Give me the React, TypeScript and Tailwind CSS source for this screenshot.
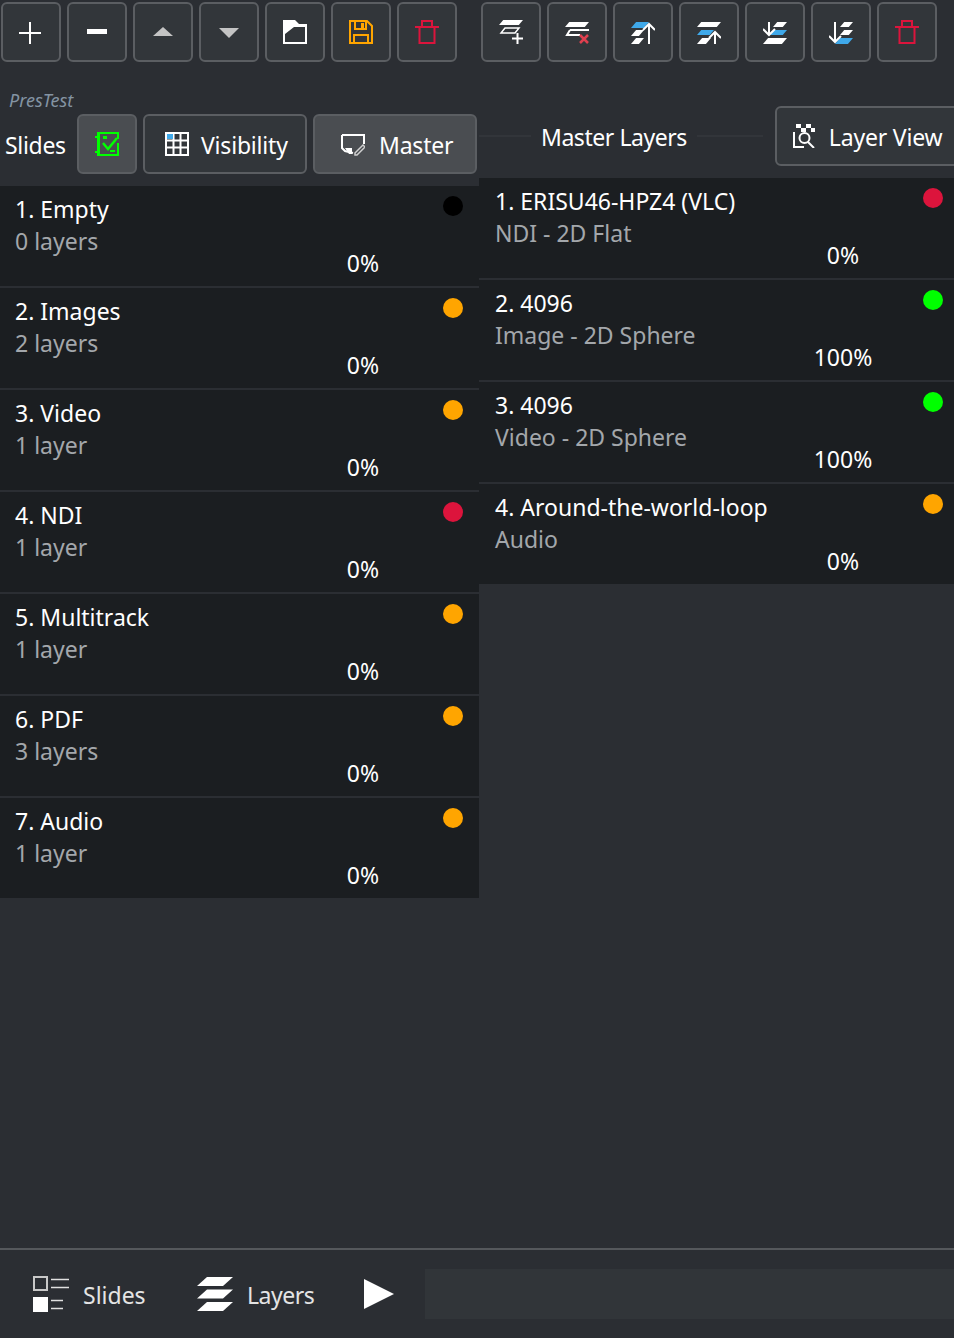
import type { ReactNode } from "react";

const BLUE = "#3fa9ea";

type RowData = {
  title: string;
  sub: string;
  pct: string;
  dot: string;
};

const slides: RowData[] = [
  { title: "1. Empty", sub: "0 layers", pct: "0%", dot: "bg-[#000000]" },
  { title: "2. Images", sub: "2 layers", pct: "0%", dot: "bg-[#ffa500]" },
  { title: "3. Video", sub: "1 layer", pct: "0%", dot: "bg-[#ffa500]" },
  { title: "4. NDI", sub: "1 layer", pct: "0%", dot: "bg-[#dc143c]" },
  { title: "5. Multitrack", sub: "1 layer", pct: "0%", dot: "bg-[#ffa500]" },
  { title: "6. PDF", sub: "3 layers", pct: "0%", dot: "bg-[#ffa500]" },
  { title: "7. Audio", sub: "1 layer", pct: "0%", dot: "bg-[#ffa500]" },
];

const layers: RowData[] = [
  { title: "1. ERISU46-HPZ4 (VLC)", sub: "NDI - 2D Flat", pct: "0%", dot: "bg-[#dc143c]" },
  { title: "2. 4096", sub: "Image - 2D Sphere", pct: "100%", dot: "bg-[#00ff00]" },
  { title: "3. 4096", sub: "Video - 2D Sphere", pct: "100%", dot: "bg-[#00ff00]" },
  { title: "4. Around-the-world-loop", sub: "Audio", pct: "0%", dot: "bg-[#ffa500]" },
];

function Icon({ children, w = 24, h = 24 }: { children: ReactNode; w?: number; h?: number }) {
  return (
    <svg width={w} height={h} viewBox={`0 0 ${w} ${h}`} fill="none" className="shrink-0">
      {children}
    </svg>
  );
}

function Trash() {
  return (
    <Icon>
      <path d="M0 7h24" stroke="#dc143c" strokeWidth="2" />
      <path d="M4.500 7v16h15V7" stroke="#dc143c" strokeWidth="2" />
      <path d="M7 6V1h10v5" stroke="#dc143c" strokeWidth="2" />
    </Icon>
  );
}

function Para({ x, y, w, h, fill }: { x: number; y: number; w: number; h: number; fill: string }) {
  const s = h * 0.85;
  return <polygon points={`${x + s},${y} ${x + w},${y} ${x + w - s},${y + h} ${x},${y + h}`} fill={fill} />;
}

function Arrow({ x, y1, y2, up }: { x: number; y1: number; y2: number; up: boolean }) {
  const tip = up ? y1 : y2;
  const back = up ? y1 + 6 : y2 - 6;
  return (
    <path d={`M${x} ${y1}V${y2}M${x - 6} ${back}L${x} ${tip}L${x + 6} ${back}`} stroke="#fff" strokeWidth="2" />
  );
}

const toolsLeft: ReactNode[] = [
  <Icon key="add">
    <path d="M11 2v22M0 13h22" stroke="#fff" strokeWidth="2" />
  </Icon>,
  <Icon key="remove">
    <rect x="2" y="9" width="20" height="5" fill="#fff" />
  </Icon>,
  <Icon key="up">
    <polygon points="2,16 22,16 12,7" fill="#c4c4c4" />
  </Icon>,
  <Icon key="down">
    <polygon points="2,8 22,8 12,18" fill="#c4c4c4" />
  </Icon>,
  <Icon key="open">
    <path fillRule="evenodd" d="M0 0H12L16 4H24V24H0ZM2 14L11 7H22V22H2Z" fill="#fff" />
  </Icon>,
  <Icon key="save">
    <path d="M1 1h17l5 5v17H1z" stroke="#ffa500" strokeWidth="2" />
    <path d="M6 1v8h11V1M5 23v-8h14v8" stroke="#ffa500" strokeWidth="2" />
    <rect x="12" y="3" width="3" height="5" fill="#ffa500" />
  </Icon>,
  <Trash key="trash" />,
];

const toolsRight: ReactNode[] = [
  <Icon key="add">
    <Para x={0} y={0} w={24} h={5} fill="#fff" />
    <path d="M6 8h14l-4 5H2z" stroke="#fff" strokeWidth="1.500" />
    <path d="M18.500 13v11M13 18.500h11" stroke="#fff" strokeWidth="2" />
  </Icon>,
  <Icon key="remove">
    <Para x={0} y={2} w={24} h={5} fill="#fff" />
    <path d="M5 10h19M5 10l-3 5h13" stroke="#fff" strokeWidth="2" />
    <path d="M15 15l8 8M23 15l-8 8" stroke="#e0404f" strokeWidth="2.500" />
  </Icon>,
  <Icon key="top">
    <Para x={0} y={2} w={18} h={6} fill={BLUE} />
    <Para x={0} y={10} w={13} h={6} fill="#fff" />
    <Para x={0} y={18} w={13} h={6} fill="#fff" />
    <Arrow x={18} y1={4} y2={24} up />
  </Icon>,
  <Icon key="raise">
    <Para x={0} y={2} w={24} h={5} fill="#fff" />
    <Para x={0} y={10} w={17} h={5} fill={BLUE} />
    <Para x={0} y={18} w={14} h={6} fill="#fff" />
    <Arrow x={18} y1={12} y2={24} up />
  </Icon>,
  <Icon key="lower">
    <Para x={10} y={2} w={14} h={5} fill="#fff" />
    <Para x={7} y={10} w={17} h={5} fill={BLUE} />
    <Para x={0} y={18} w={24} h={6} fill="#fff" />
    <Arrow x={6} y1={2} y2={15} up={false} />
  </Icon>,
  <Icon key="bottom">
    <Para x={11} y={2} w={13} h={5} fill="#fff" />
    <Para x={11} y={10} w={13} h={5} fill="#fff" />
    <Para x={6} y={18} w={18} h={6} fill={BLUE} />
    <Arrow x={6} y1={2} y2={22} up={false} />
  </Icon>,
  <Trash key="trash" />,
];

const checkIcon = (
  <Icon>
    <path d="M2 0h22v7h-2V2H5v20h17V11h2v13H2v-3H0v-2h2V6H0V4h2z" fill="#00ff00" />
    <rect x="8" y="4" width="4" height="3" fill="#00ff00" />
    <path d="M8 11l5 6 9-11" stroke="#00ff00" strokeWidth="2.500" />
    <rect x="15" y="18" width="5" height="2" fill="#00ff00" />
  </Icon>
);

const gridIcon = (
  <Icon>
    <rect x="1" y="1" width="22" height="22" stroke="#fff" strokeWidth="2" />
    <path d="M8.500 1v22M15.500 1v22M1 8.500h22M1 15.500h22" stroke="#fff" strokeWidth="2" />
    <rect x="2" y="2" width="6" height="5" fill={BLUE} />
  </Icon>
);

const masterIcon = (
  <Icon>
    <path d="M1 3h22v9M1 3v13l3 3 8 2" stroke="#fff" strokeWidth="2" />
    <polygon points="4,16 11,16 11,22 8,22" fill="#fff" />
    <path d="M14 21l8-8 2 2-8 8h-2z" stroke="#d0d0d0" strokeWidth="1.500" />
  </Icon>
);

const layerViewIcon = (
  <Icon w={22} h={24}>
    <path d="M3 0h5v4H3zM13 0h5v4h-5zM8 4h5v4H8zM18 4h4v4h-4z" fill="#fff" />
    <path d="M1 8v15h10" stroke="#fff" strokeWidth="2" />
    <circle cx="11.500" cy="14" r="5" stroke="#fff" strokeWidth="2" />
    <path d="M15 18l6 6" stroke="#fff" strokeWidth="2" />
  </Icon>
);

const footerSlidesIcon = (
  <Icon w={36} h={36}>
    <rect x="1" y="1" width="13" height="13" stroke="#c8c8c8" strokeWidth="2" />
    <path d="M18 3.500h18M18 11.500h18M18 24.500h12M18 32.500h12" stroke="#e0e0e0" strokeWidth="1.500" />
    <rect x="0" y="21" width="15" height="15" fill="#fff" />
  </Icon>
);

const footerLayersIcon = (
  <Icon w={36} h={34}>
    <polygon points="10,0 36,0 26,9 0,9" fill="#fff" />
    <polygon points="10,12.500 36,12.500 26,21.500 0,21.500" fill="#fff" />
    <polygon points="10,25 36,25 26,34 0,34" fill="#fff" />
  </Icon>
);

function ToolButton({ children }: { children: ReactNode }) {
  return (
    <button className="flex h-[60px] w-[60px] items-center justify-center rounded-[6px] border-2 border-[#5b5e62] bg-[#32363a]">
      {children}
    </button>
  );
}

function PillButton({
  icon,
  label,
  active = false,
  className = "",
}: {
  icon: ReactNode;
  label?: string;
  active?: boolean;
  className?: string;
}) {
  return (
    <button
      className={`flex h-[60px] shrink-0 items-center rounded-[6px] border-2 border-[#5b5e62] text-white ${
        active ? "bg-[#4a4d51]" : "bg-[#32363a]"
      } ${className}`}
    >
      {icon}
      {label ? <span className="mt-[3px] tracking-[-0.2px]">{label}</span> : null}
    </button>
  );
}

function ListRow({ row, inset }: { row: RowData; inset: string }) {
  return (
    <div className={`flex h-[100px] bg-[#1b1e21] pt-[7px] leading-8 ${inset}`}>
      <div className="flex-1">
        <div className="text-white">{row.title}</div>
        <div className="text-[#a3a7ab]">{row.sub}</div>
      </div>
      <div className="mb-[7px] w-[120px] self-end text-center text-white">{row.pct}</div>
      <div className={`ml-5 mt-[3px] h-5 w-5 rounded-full ${row.dot}`} />
    </div>
  );
}

export default function App() {
  return (
    <div className="flex h-screen flex-col overflow-hidden bg-[#2b2e33] font-['Noto_Sans','Open_Sans',sans-serif] text-[23px] text-white">
      <div className="flex pl-[1px] pt-[2px]">
        <div className="flex gap-[6px]">
          {toolsLeft.map((icon, i) => (
            <ToolButton key={i}>{icon}</ToolButton>
          ))}
        </div>
        <div className="ml-6 flex gap-[6px]">
          {toolsRight.map((icon, i) => (
            <ToolButton key={i}>{icon}</ToolButton>
          ))}
        </div>
      </div>

      <div className="flex flex-1">
        <div className="w-[479px]">
          <div className="pl-[9px] pt-[27px] text-[18px] italic leading-[22px] text-[#8494a3]">PresTest</div>
          <div className="mt-[3px] flex items-center pl-[5px]">
            <span className="mt-[2px] w-[72px] tracking-[-0.3px]">Slides</span>
            <PillButton icon={checkIcon} active className="w-[60px] justify-center" />
            <PillButton icon={gridIcon} label="Visibility" className="ml-[6px] w-[164px] gap-3 pl-5" />
            <PillButton icon={masterIcon} label="Master" active className="ml-[6px] w-[164px] gap-[14px] pl-[26px]" />
          </div>
          <div className="mt-3 flex flex-col gap-[2px]">
            {slides.map((s) => (
              <ListRow key={s.title} row={s} inset="pl-[15px] pr-4" />
            ))}
          </div>
        </div>

        <div className="min-w-0 flex-1">
          <div className="mt-11 flex items-center">
            <div className="h-[2px] w-[52px] shrink-0 bg-[#32353a]" />
            <span className="mx-[10px] mt-[2px] shrink-0 whitespace-nowrap tracking-[-0.45px]">Master Layers</span>
            <div className="h-[2px] w-[66px] shrink-0 bg-[#32353a]" />
            <PillButton icon={layerViewIcon} label="Layer View" className="ml-3 w-[190px] gap-[14px] pl-4" />
          </div>
          <div className="mt-3 flex flex-col gap-[2px]">
            {layers.map((l) => (
              <ListRow key={l.title} row={l} inset="pl-4 pr-[11px]" />
            ))}
          </div>
        </div>
      </div>

      <div className="flex h-[90px] items-center border-t-2 border-[#55585c]">
        <div className="ml-[33px] flex w-[164px] items-center gap-[14px] text-[#e4e4e4]">
          {footerSlidesIcon}
          <span className="mt-[2px]">Slides</span>
        </div>
        <div className="flex w-[167px] items-center gap-[14px] text-[#e4e4e4]">
          {footerLayersIcon}
          <span className="mt-[2px] tracking-[-0.5px]">Layers</span>
        </div>
        <svg width="30" height="30" viewBox="0 0 30 30" className="shrink-0">
          <polygon points="0,0 30,15 0,30" fill="#fff" />
        </svg>
        <div className="ml-[31px] h-[50px] flex-1 bg-[#313539]" />
      </div>
    </div>
  );
}
